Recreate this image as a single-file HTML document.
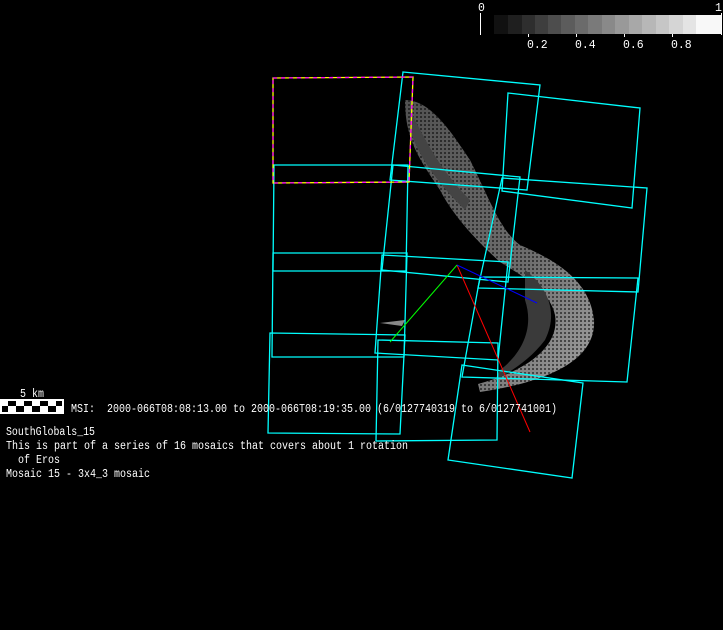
<!DOCTYPE html>
<html><head><meta charset="utf-8"><style>
html,body{margin:0;padding:0;background:#000;width:723px;height:630px;overflow:hidden}
svg{display:block}
text{font-family:"Liberation Mono","DejaVu Sans Mono",monospace;font-size:11.5px;fill:#fff;white-space:pre}
</style></head><body>
<svg width="723" height="630" viewBox="0 0 723 630" xmlns="http://www.w3.org/2000/svg">
<defs>
<linearGradient id="ast" x1="0" y1="0" x2="1" y2="1"><stop offset="0" stop-color="#666"/><stop offset="0.6" stop-color="#888"/><stop offset="1" stop-color="#ccc"/></linearGradient>
<pattern id="mesh" width="4" height="4" patternUnits="userSpaceOnUse"><rect width="4" height="4" fill="none"/><rect width="2" height="2" fill="#000" opacity="0.5"/></pattern>
</defs>
<g>
<rect x="494" y="15" width="14" height="19" fill="#111"/><rect x="508" y="15" width="14" height="19" fill="#1f1f1f"/>
<rect x="522" y="15" width="13" height="19" fill="#2e2e2e"/><rect x="535" y="15" width="13" height="19" fill="#3e3e3e"/>
<rect x="548" y="15" width="13" height="19" fill="#4d4d4d"/><rect x="561" y="15" width="14" height="19" fill="#5c5c5c"/>
<rect x="575" y="15" width="13" height="19" fill="#6b6b6b"/><rect x="588" y="15" width="14" height="19" fill="#7a7a7a"/>
<rect x="602" y="15" width="13" height="19" fill="#898989"/><rect x="615" y="15" width="14" height="19" fill="#999"/>
<rect x="629" y="15" width="13" height="19" fill="#a8a8a8"/><rect x="642" y="15" width="14" height="19" fill="#b7b7b7"/>
<rect x="656" y="15" width="13" height="19" fill="#c6c6c6"/><rect x="669" y="15" width="14" height="19" fill="#d5d5d5"/>
<rect x="683" y="15" width="13" height="19" fill="#e4e4e4"/><rect x="696" y="15" width="26" height="19" fill="#f8f8f8"/>
<line x1="480.5" y1="13" x2="480.5" y2="35" stroke="#fff"/><line x1="721.5" y1="13" x2="721.5" y2="35" stroke="#fff"/>
<g stroke="#fff"><line x1="528.5" y1="34" x2="528.5" y2="37"/><line x1="576.5" y1="34" x2="576.5" y2="37"/><line x1="624.5" y1="34" x2="624.5" y2="37"/><line x1="672.5" y1="34" x2="672.5" y2="37"/></g>
<text x="478" y="11">0</text><text x="715" y="11">1</text>
<text x="527" y="48">0.2</text><text x="575" y="48">0.4</text><text x="623" y="48">0.6</text><text x="671" y="48">0.8</text>
</g>
<g>
<path d="M405,100 C430,100 450,130 470,160 C490,200 500,230 520,245 C555,260 590,280 594,320 C596,355 560,380 480,392 L478,384 C530,370 560,345 555,315 C550,290 520,275 500,262 C470,235 450,210 440,190 C420,160 405,140 405,100 Z" fill="url(#ast)" opacity="0.8"/>
<path d="M405,100 C430,100 450,130 470,160 C490,200 500,230 520,245 C555,260 590,280 594,320 C596,355 560,380 480,392 L478,384 C530,370 560,345 555,315 C550,290 520,275 500,262 C470,235 450,210 440,190 C420,160 405,140 405,100 Z" fill="url(#mesh)"/>
<path d="M410,110 C425,140 440,170 470,200 L465,210 C440,185 420,160 410,130 Z" fill="#444"/>
<path d="M525,270 C545,285 560,310 545,340 C530,360 510,372 495,380 L500,370 C520,355 535,330 525,300 Z" fill="#3a3a3a"/>
<path d="M380,323 L405,320 L402,326 Z" fill="#888"/>
</g>
<g fill="none" stroke="#0ff" stroke-width="1.3">
<polygon points="274,165 408,165 406,271 273,271"/>
<polygon points="273,253 407,253 404,357 272,357"/>
<polygon points="270,333 405,335 400,434 268,433"/>
<polygon points="403,72 540,85 527,190 390,180"/>
<polygon points="393,165 520,177 508,282 382,270"/>
<polygon points="382,255 508,262 498,360 375,353"/>
<polygon points="378,340 498,343 497,440 376,441"/>
<polygon points="508,93 640,108 632,208 502,191"/>
<polygon points="502,178 647,188 638,292 478,288"/>
<polygon points="480,277 638,278 627,382 462,377"/>
<polygon points="462,365 583,383 572,478 448,460"/>
</g>
<polygon points="273,78 413,77 409,182 273,183" fill="none" stroke="#ff0" stroke-width="1.3"/>
<polygon points="273,78 413,77 409,182 273,183" fill="none" stroke="#f0f" stroke-width="1.3" stroke-dasharray="4 4"/>
<line x1="457" y1="265" x2="530" y2="432" stroke="#f00"/>
<line x1="457" y1="265" x2="537" y2="303" stroke="#00f"/>
<line x1="457" y1="265" x2="390" y2="342" stroke="#0f0"/>
<rect x="0" y="399" width="64" height="15" fill="#fff"/>
<g fill="#000">
<rect x="8" y="401" width="8" height="5"/><rect x="24" y="401" width="8" height="5"/><rect x="40" y="401" width="8" height="5"/><rect x="56" y="401" width="6" height="5"/>
<rect x="2" y="406" width="6" height="6"/><rect x="16" y="406" width="8" height="6"/><rect x="32" y="406" width="8" height="6"/><rect x="48" y="406" width="8" height="6"/>
</g>
<text x="20" y="397" textLength="24" lengthAdjust="spacingAndGlyphs">5 km</text>
<text x="71" y="412" textLength="486" lengthAdjust="spacingAndGlyphs">MSI:  2000-066T08:08:13.00 to 2000-066T08:19:35.00 (6/0127740319 to 6/0127741001)</text>
<text x="6" y="435" textLength="89" lengthAdjust="spacingAndGlyphs">SouthGlobals_15</text>
<text x="6" y="449" textLength="402" lengthAdjust="spacingAndGlyphs">This is part of a series of 16 mosaics that covers about 1 rotation</text>
<text x="18" y="463" textLength="42" lengthAdjust="spacingAndGlyphs">of Eros</text>
<text x="6" y="477" textLength="144" lengthAdjust="spacingAndGlyphs">Mosaic 15 - 3x4_3 mosaic</text>
</svg>
</body></html>
